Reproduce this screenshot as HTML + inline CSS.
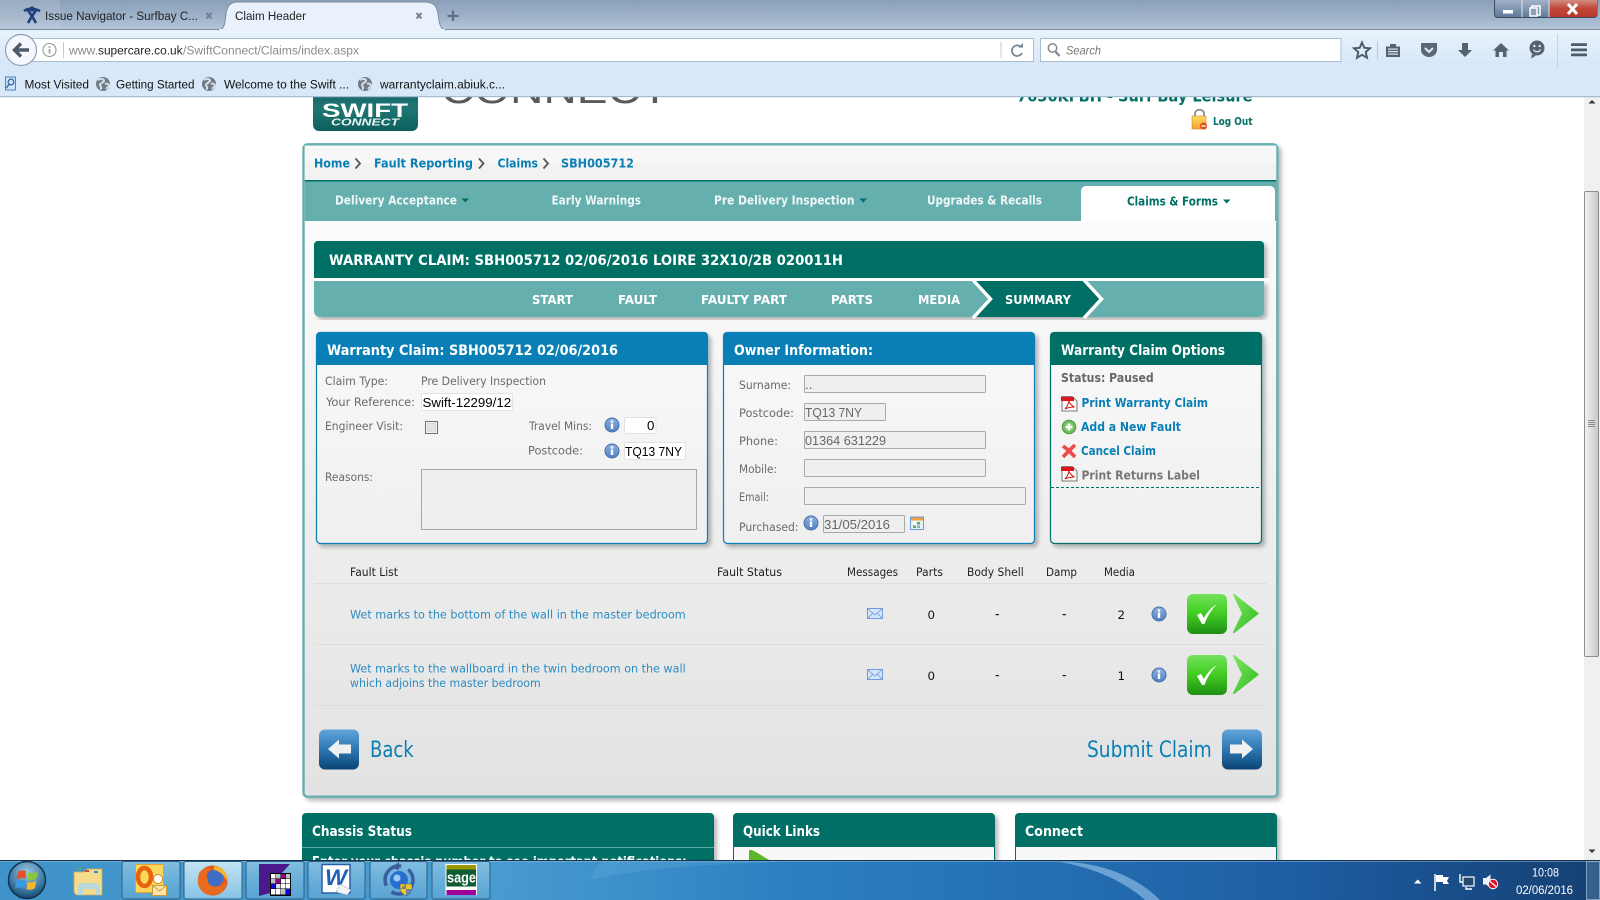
<!DOCTYPE html>
<html><head><meta charset="utf-8"><title>Claim Header</title>
<style>
html,body{margin:0;padding:0;background:#fff;width:1600px;height:900px;overflow:hidden}
svg{display:block}
text{font-family:"DejaVu Sans","Liberation Sans",sans-serif;font-size:12px;white-space:pre}
.l{fill:#6a6a6a;font-size:11.8px}
.h{fill:#222;font-size:11.8px}
.f{fill:#2b8cc0;font-size:11.8px}
.n{fill:#111;font-size:11.8px}
.hd{fill:#fff;font-weight:bold;font-size:14px}
.st{fill:#fff;font-weight:bold;font-size:12.5px}
.nv{fill:#eef7f6;font-weight:bold;font-size:12px}
.bc{fill:#0a7fb5;font-weight:bold;font-size:12.5px}
.lk{fill:#0a7fb5;font-weight:bold;font-size:12.3px}
.ch{font-family:"Liberation Sans",sans-serif;font-size:12.3px;fill:#222}
.in{font-family:"Liberation Sans",sans-serif;font-size:13.3px;fill:#000}
.ig{font-family:"Liberation Sans",sans-serif;font-size:13.3px;fill:#666}
.big{fill:#0a7fb5;font-size:22px}
</style></head><body>
<svg xmlns="http://www.w3.org/2000/svg" width="1600" height="900" viewBox="0 0 1600 900">
<defs>
<linearGradient id="title" x1="0" y1="0" x2="0" y2="1"><stop offset="0" stop-color="#8aa0ba"/><stop offset=".6" stop-color="#9fb3ca"/><stop offset="1" stop-color="#b6c7da"/></linearGradient>
<linearGradient id="bar" x1="0" y1="0" x2="0" y2="1"><stop offset="0" stop-color="#e9f2fc"/><stop offset="1" stop-color="#d9e8f8"/></linearGradient>
<linearGradient id="pan" x1="0" y1="0" x2="0" y2="1"><stop offset="0" stop-color="#ffffff"/><stop offset="1" stop-color="#e2e2e2"/></linearGradient>
<linearGradient id="bd" x1="0" y1="0" x2="0" y2="1"><stop offset="0" stop-color="#f9f9f9"/><stop offset="1" stop-color="#efefef"/></linearGradient>
<linearGradient id="logo" x1="0" y1="0" x2="0" y2="1"><stop offset="0" stop-color="#0f5f5c"/><stop offset=".5" stop-color="#1f7773"/><stop offset="1" stop-color="#0d5f5d"/></linearGradient>
<linearGradient id="blu" x1="0" y1="0" x2="0" y2="1"><stop offset="0" stop-color="#62a4da"/><stop offset=".5" stop-color="#2d77b3"/><stop offset="1" stop-color="#0b4474"/></linearGradient>
<linearGradient id="grn" x1="0" y1="0" x2="0" y2="1"><stop offset="0" stop-color="#74e25c"/><stop offset=".45" stop-color="#44d024"/><stop offset="1" stop-color="#1f8f14"/></linearGradient>
<linearGradient id="gar" x1="0" y1="0" x2="1" y2="1"><stop offset="0" stop-color="#7fe860"/><stop offset="1" stop-color="#2fb81e"/></linearGradient>
<linearGradient id="inf" x1="0" y1="0" x2="0" y2="1"><stop offset="0" stop-color="#8fb2e0"/><stop offset="1" stop-color="#4f80c0"/></linearGradient>
<linearGradient id="task" x1="0" y1="0" x2="1" y2="0"><stop offset="0" stop-color="#3f93c8"/><stop offset=".3" stop-color="#4a9dd0"/><stop offset=".5" stop-color="#2b7fc1"/><stop offset=".8" stop-color="#1e5fa5"/><stop offset="1" stop-color="#153f72"/></linearGradient>
<linearGradient id="btn" x1="0" y1="0" x2="0" y2="1"><stop offset="0" stop-color="#8cc4e4" stop-opacity=".85"/><stop offset="1" stop-color="#5ea8d6" stop-opacity=".7"/></linearGradient>
<linearGradient id="btn2" x1="0" y1="0" x2="0" y2="1"><stop offset="0" stop-color="#c4e4f4"/><stop offset="1" stop-color="#86c2e4"/></linearGradient>
<linearGradient id="wmin" x1="0" y1="0" x2="0" y2="1"><stop offset="0" stop-color="#a8b8cb"/><stop offset=".5" stop-color="#8498b2"/><stop offset="1" stop-color="#5d7896"/></linearGradient>
<linearGradient id="wcl" x1="0" y1="0" x2="0" y2="1"><stop offset="0" stop-color="#d2958a"/><stop offset=".5" stop-color="#c2493a"/><stop offset="1" stop-color="#b8382a"/></linearGradient>
<linearGradient id="thumb" x1="0" y1="0" x2="1" y2="0"><stop offset="0" stop-color="#f2f2f2"/><stop offset=".6" stop-color="#d8d8d8"/><stop offset="1" stop-color="#c6c6c6"/></linearGradient>
<linearGradient id="lock" x1="0" y1="0" x2="0" y2="1"><stop offset="0" stop-color="#ffd968"/><stop offset="1" stop-color="#f2a52a"/></linearGradient>
<radialGradient id="orb" cx=".5" cy=".3" r=".75"><stop offset="0" stop-color="#9cc6e2"/><stop offset=".6" stop-color="#3f7fa8"/><stop offset="1" stop-color="#0f3a60"/></radialGradient>
<clipPath id="refclip"><rect x="422" y="394" width="90" height="16"/></clipPath>
<clipPath id="toplogo"><rect x="300" y="97" width="130" height="40"/></clipPath>
<filter id="sh" x="-5%" y="-5%" width="112%" height="112%"><feDropShadow dx="3" dy="3" stdDeviation="2" flood-color="#000" flood-opacity=".28"/></filter>
<g id="info"><circle r="7" fill="url(#inf)" stroke="#4470ad" stroke-width="1"/><rect x="-1.2" y="-1.5" width="2.4" height="5.5" fill="#fff"/><rect x="-1.2" y="-4.6" width="2.4" height="2.2" fill="#fff"/></g>
<g id="pdf"><path d="M0 .5H10L15 5V15H0Z" fill="#f8f8f8" stroke="#555" stroke-width=".8"/><path d="M-1 1H12V5H-1Z" fill="#e0141a"/><path d="M3 13C6 10 7 6 6.5 4.5C8 8 10 10 12.5 11C9 11 6 11.500 3 13Z" fill="none" stroke="#d02020" stroke-width="1"/></g>
<g id="env"><rect x=".5" y=".5" width="15" height="10" fill="#d7e6f9" stroke="#6f9bd8"/><path d="M1 1L8 7L15 1M1 10L6 5M15 10L10 5" fill="none" stroke="#7fa7dc" stroke-width="1"/></g>
<g id="chk"><rect width="40" height="40" rx="6" fill="url(#grn)"/><path d="M10 21L14 19L17 24C20 18 25 13 30 10C24 16 20 23 17.500 30L15 30Z" fill="#fff"/></g>
<path id="garr" d="M0 1Q0 -1 2 .5L26 19.500L2 38.500Q0 40 0 38L9 19.500Z" fill="url(#gar)"/>
<g id="globe"><circle r="7" fill="#6f7b87"/><path d="M-5 -4C-2 -6 1 -5 1 -3C0 -1 -3 -1 -3 1C-2 3 -1 5 -3 5M2 0C4 -1 6 0 6 2L3 5" fill="none" stroke="#d7dee6" stroke-width="2"/></g>
</defs>

<rect width="1600" height="900" fill="#fff"/>

<!-- top page fragments -->
<g clip-path="url(#toplogo)"><rect x="313" y="85" width="105" height="46" rx="6" fill="url(#logo)"/></g>
<text x="322" y="117" textLength="86" lengthAdjust="spacingAndGlyphs" style="font-family:'Liberation Sans',sans-serif;font-size:19px;font-weight:bold;fill:#fff">SWIFT</text>
<text x="331" y="125.500" textLength="68" lengthAdjust="spacingAndGlyphs" style="font-family:'Liberation Sans',sans-serif;font-size:10px;font-weight:bold;font-style:italic;fill:#e8f4f2">CONNECT</text>
<text x="441" y="103" textLength="228" lengthAdjust="spacingAndGlyphs" style="font-family:'Liberation Sans',sans-serif;font-size:38px;fill:#57595b">CONNECT</text>
<text x="1017" y="101.500" textLength="235.500" lengthAdjust="spacingAndGlyphs" style="font-size:16px;font-weight:bold;fill:#006f65">7656KFBH - Surf Bay Leisure</text>
<g>
<path d="M1195 117V113.500C1195 108.500 1204 108.500 1204 113.500V117" fill="none" stroke="#8a8f94" stroke-width="1.800"/>
<rect x="1192" y="116" width="14" height="13" fill="url(#lock)" stroke="#c88a2a" stroke-width=".6"/>
<circle cx="1203.500" cy="126" r="3.500" fill="#e0501a"/><rect x="1201.500" y="125.300" width="4" height="1.400" fill="#fff"/>
</g>
<text x="1213" y="125" textLength="39.500" lengthAdjust="spacingAndGlyphs" style="font-size:10.500px;font-weight:bold;fill:#006f65">Log Out</text>

<!-- main panel -->
<rect x="303.500" y="144.300" width="973.800" height="652.400" rx="4" fill="url(#pan)" stroke="#66afaf" stroke-width="2.400" filter="url(#sh)"/>
<rect x="304.700" y="145.500" width="971.500" height="17.500" fill="#f7f7f7"/>
<rect x="304.700" y="163" width="971.500" height="17" fill="#f2f2f0"/>
<rect x="304.700" y="180" width="971.500" height="1.500" fill="#006f65"/>
<rect x="304.700" y="181.500" width="971.500" height="39.500" fill="#66afaf"/>
<path d="M1081 221V191a5 5 0 0 1 5-5H1270a5 5 0 0 1 5 5V221Z" fill="#fff"/>
<rect x="304.700" y="221" width="971.500" height="1" fill="#fff"/>

<text class="bc" x="314" y="167.500" textLength="36" lengthAdjust="spacingAndGlyphs">Home</text>
<path d="M355.500 158.500L360 163.500L355.500 168.500" fill="none" stroke="#555" stroke-width="1.800"/>
<text class="bc" x="374" y="167.500" textLength="99" lengthAdjust="spacingAndGlyphs">Fault Reporting</text>
<path d="M479 158.500L483.500 163.500L479 168.500" fill="none" stroke="#555" stroke-width="1.800"/>
<text class="bc" x="497.500" y="167.500" textLength="40.500" lengthAdjust="spacingAndGlyphs">Claims</text>
<path d="M543.500 158.500L548 163.500L543.500 168.500" fill="none" stroke="#555" stroke-width="1.800"/>
<text class="bc" x="561" y="167.500" textLength="73" lengthAdjust="spacingAndGlyphs">SBH005712</text>

<text class="nv" x="335" y="204.500" textLength="122" lengthAdjust="spacingAndGlyphs">Delivery Acceptance</text>
<path d="M461.500 198.500H469L465.200 202.500Z" fill="#006f65"/>
<text class="nv" x="551.500" y="204.500" textLength="89.500" lengthAdjust="spacingAndGlyphs">Early Warnings</text>
<text class="nv" x="714" y="204.500" textLength="140.500" lengthAdjust="spacingAndGlyphs">Pre Delivery Inspection</text>
<path d="M859.500 198.500H867L863.200 202.500Z" fill="#006f65"/>
<text class="nv" x="927" y="204.500" textLength="115" lengthAdjust="spacingAndGlyphs">Upgrades &amp; Recalls</text>
<text class="nv" x="1127" y="205.500" textLength="91" lengthAdjust="spacingAndGlyphs" style="fill:#006f65">Claims &amp; Forms</text>
<path d="M1223 199.500H1230.500L1226.700 203.500Z" fill="#006f65"/>

<!-- title bars -->
<path d="M314 278V245a4 4 0 0 1 4-4H1260a4 4 0 0 1 4 4V278Z" fill="#006f65" filter="url(#sh)"/>
<text class="hd" x="329" y="265" textLength="514" lengthAdjust="spacingAndGlyphs">WARRANTY CLAIM: SBH005712 02/06/2016 LOIRE 32X10/2B 020011H</text>
<rect x="314" y="278" width="955" height="3" fill="#fff"/>
<path d="M314 281H1264V311a6 6 0 0 1-6 6H320a6 6 0 0 1-6-6Z" fill="#66afaf" filter="url(#sh)"/>
<path d="M973 281H1084L1101.500 299L1084 317H973L990.500 299Z" fill="#006f65"/>
<path d="M973 280L990.500 299L973 318M1084 280L1101.500 299L1084 318" fill="none" stroke="#fff" stroke-width="3.500"/>
<rect x="960" y="316.800" width="160" height="1" fill="#66afaf" opacity="0"/>
<text class="st" x="532" y="304" textLength="41" lengthAdjust="spacingAndGlyphs">START</text>
<text class="st" x="618" y="304" textLength="39" lengthAdjust="spacingAndGlyphs">FAULT</text>
<text class="st" x="701" y="304" textLength="86" lengthAdjust="spacingAndGlyphs">FAULTY PART</text>
<text class="st" x="831" y="304" textLength="42" lengthAdjust="spacingAndGlyphs">PARTS</text>
<text class="st" x="918" y="304" textLength="42" lengthAdjust="spacingAndGlyphs">MEDIA</text>
<text class="st" x="1005" y="304" textLength="66" lengthAdjust="spacingAndGlyphs">SUMMARY</text>

<!-- panel 1 -->
<rect x="316.500" y="332.500" width="391" height="211" rx="4" fill="url(#bd)" stroke="#0a7fb5" stroke-width="1.200" filter="url(#sh)"/>
<path d="M316 365V336a4 4 0 0 1 4-4H704a4 4 0 0 1 4 4V365Z" fill="#0a7fb5"/>
<text class="hd" x="327" y="355" textLength="291" lengthAdjust="spacingAndGlyphs">Warranty Claim: SBH005712 02/06/2016</text>
<text class="l" x="325" y="385" textLength="63" lengthAdjust="spacingAndGlyphs">Claim Type:</text>
<text class="l" x="421" y="385" textLength="125" lengthAdjust="spacingAndGlyphs">Pre Delivery Inspection</text>
<text class="l" x="326" y="406" textLength="89" lengthAdjust="spacingAndGlyphs">Your Reference:</text>
<rect x="421.500" y="393.500" width="91" height="17" rx="1.500" fill="#fff" stroke="#e2e2e2"/>
<g clip-path="url(#refclip)"><text class="in" x="422.500" y="407" textLength="96" lengthAdjust="spacingAndGlyphs">Swift-12299/123</text></g>
<text class="l" x="325" y="430" textLength="78" lengthAdjust="spacingAndGlyphs">Engineer Visit:</text>
<rect x="425.500" y="421.500" width="12" height="12" fill="#f2f2f2" stroke="#707070"/>
<rect x="427.500" y="423.500" width="8" height="8" fill="#e4e4e4" stroke="#c8c8c8" stroke-width=".5"/>
<text class="l" x="529" y="430" textLength="63" lengthAdjust="spacingAndGlyphs">Travel Mins:</text>
<use href="#info" x="612" y="425"/>
<rect x="624.500" y="417.500" width="31.500" height="16" rx="1.500" fill="#fff" stroke="#e2e2e2"/>
<text class="in" x="647" y="430">0</text>
<text class="l" x="528" y="454.500" textLength="55" lengthAdjust="spacingAndGlyphs">Postcode:</text>
<use href="#info" x="612" y="451"/>
<rect x="624.500" y="442.500" width="61" height="17" rx="1.500" fill="#fff" stroke="#e2e2e2"/>
<text class="in" x="625" y="456" textLength="57" lengthAdjust="spacingAndGlyphs">TQ13 7NY</text>
<text class="l" x="325" y="481" textLength="48" lengthAdjust="spacingAndGlyphs">Reasons:</text>
<rect x="421.500" y="469.500" width="275" height="60" fill="#efefef" stroke="#a9a9a9"/>

<!-- panel 2 -->
<rect x="723.500" y="332.500" width="311" height="211" rx="4" fill="url(#bd)" stroke="#0a7fb5" stroke-width="1.200" filter="url(#sh)"/>
<path d="M723 365V336a4 4 0 0 1 4-4H1031a4 4 0 0 1 4 4V365Z" fill="#0a7fb5"/>
<text class="hd" x="734" y="355" textLength="139" lengthAdjust="spacingAndGlyphs">Owner Information:</text>
<g fill="#efefef" stroke="#a9a9a9">
<rect x="804.500" y="375.500" width="181" height="17" rx="1"/>
<rect x="804.500" y="403.500" width="81" height="17" rx="1"/>
<rect x="804.500" y="431.500" width="181" height="17" rx="1"/>
<rect x="804.500" y="459.500" width="181" height="17" rx="1"/>
<rect x="804.500" y="487.500" width="221" height="17" rx="1"/>
<rect x="823.500" y="515.500" width="81" height="17" rx="1"/>
</g>
<text class="l" x="739" y="389" textLength="52" lengthAdjust="spacingAndGlyphs">Surname:</text>
<text class="l" x="739" y="417" textLength="55" lengthAdjust="spacingAndGlyphs">Postcode:</text>
<text class="l" x="739" y="445" textLength="39" lengthAdjust="spacingAndGlyphs">Phone:</text>
<text class="l" x="739" y="473" textLength="38" lengthAdjust="spacingAndGlyphs">Mobile:</text>
<text class="l" x="739" y="501" textLength="30" lengthAdjust="spacingAndGlyphs">Email:</text>
<text class="l" x="739" y="531" textLength="59.500" lengthAdjust="spacingAndGlyphs">Purchased:</text>
<text class="ig" x="805" y="389">..</text>
<text class="ig" x="805" y="417" textLength="57" lengthAdjust="spacingAndGlyphs">TQ13 7NY</text>
<text class="ig" x="805" y="445" textLength="81" lengthAdjust="spacingAndGlyphs">01364 631229</text>
<text class="ig" x="824" y="529" textLength="66" lengthAdjust="spacingAndGlyphs">31/05/2016</text>
<use href="#info" x="811" y="523"/>
<g><rect x="910.500" y="517" width="13" height="12.500" fill="#e8f0fa" stroke="#6f9bd8"/><rect x="911" y="517.500" width="12" height="3" fill="#f0a040"/><rect x="913" y="522" width="3" height="2.500" fill="#fff"/><rect x="917" y="522" width="3" height="2.500" fill="#4caf50"/><rect x="913" y="525.500" width="3" height="2.500" fill="#4caf50"/><rect x="917" y="525.500" width="3" height="2.500" fill="#9ab"/></g>

<!-- panel 3 -->
<rect x="1050.500" y="332.500" width="211" height="211" rx="4" fill="url(#bd)" stroke="#006f65" stroke-width="1.200" filter="url(#sh)"/>
<path d="M1050 365V336a4 4 0 0 1 4-4H1258a4 4 0 0 1 4 4V365Z" fill="#006f65"/>
<text class="hd" x="1061" y="355" textLength="164" lengthAdjust="spacingAndGlyphs">Warranty Claim Options</text>
<text x="1061" y="382" textLength="92.700" lengthAdjust="spacingAndGlyphs" style="font-weight:bold;font-size:12.300px;fill:#666">Status: Paused</text>
<use href="#pdf" x="1062" y="396"/>
<text class="lk" x="1081.500" y="407" textLength="126.500" lengthAdjust="spacingAndGlyphs">Print Warranty Claim</text>
<g><circle cx="1069" cy="427" r="6.800" fill="#6fbd5e" stroke="#4a9a40"/><circle cx="1069" cy="427" r="3.800" fill="#a8dca0"/><rect x="1065.500" y="426" width="7" height="2" fill="#fff"/><rect x="1068" y="423.500" width="2" height="7" fill="#fff"/></g>
<text class="lk" x="1081" y="431" textLength="100" lengthAdjust="spacingAndGlyphs">Add a New Fault</text>
<path d="M1063 446L1069 450.700M1075 445L1069 450.700L1063 457M1069 450.700L1075 457" fill="none" stroke="#ee4a4a" stroke-width="3.600"/>
<text class="lk" x="1081" y="455" textLength="75" lengthAdjust="spacingAndGlyphs">Cancel Claim</text>
<use href="#pdf" x="1062" y="466"/>
<text x="1081.500" y="479.500" textLength="118.500" lengthAdjust="spacingAndGlyphs" style="font-weight:bold;font-size:12.300px;fill:#777">Print Returns Label</text>
<path d="M1051 487.500H1259" stroke="#006f65" stroke-width="1" stroke-dasharray="3 2"/>

<!-- fault list -->
<text class="h" x="350" y="576" textLength="48" lengthAdjust="spacingAndGlyphs">Fault List</text>
<text class="h" x="717" y="576" textLength="65" lengthAdjust="spacingAndGlyphs">Fault Status</text>
<text class="h" x="847" y="576" textLength="51" lengthAdjust="spacingAndGlyphs">Messages</text>
<text class="h" x="916" y="576" textLength="27" lengthAdjust="spacingAndGlyphs">Parts</text>
<text class="h" x="967" y="576" textLength="56.700" lengthAdjust="spacingAndGlyphs">Body Shell</text>
<text class="h" x="1046" y="576" textLength="31" lengthAdjust="spacingAndGlyphs">Damp</text>
<text class="h" x="1104" y="576" textLength="31" lengthAdjust="spacingAndGlyphs">Media</text>
<g fill="#dddddd"><rect x="314" y="583" width="953" height="1"/><rect x="314" y="644" width="953" height="1"/><rect x="314" y="705" width="953" height="1"/></g>

<text class="f" x="350" y="618.500" textLength="335.700" lengthAdjust="spacingAndGlyphs">Wet marks to the bottom of the wall in the master bedroom</text>
<text class="f" x="350" y="672.500" textLength="335.700" lengthAdjust="spacingAndGlyphs">Wet marks to the wallboard in the twin bedroom on the wall</text>
<text class="f" x="350" y="687" textLength="190.700" lengthAdjust="spacingAndGlyphs">which adjoins the master bedroom</text>

<use href="#env" x="867" y="608"/><use href="#env" x="867" y="669"/>
<text class="n" x="927.500" y="619">0</text><text class="n" x="927.500" y="680">0</text>
<rect x="995.500" y="614" width="3.500" height="1.200" fill="#222"/><rect x="995.500" y="675" width="3.500" height="1.200" fill="#222"/>
<rect x="1062.500" y="614" width="3.500" height="1.200" fill="#222"/><rect x="1062.500" y="675" width="3.500" height="1.200" fill="#222"/>
<text class="n" x="1117.500" y="619">2</text><text class="n" x="1117.500" y="680">1</text>
<use href="#info" x="1159" y="614"/><use href="#info" x="1159" y="675"/>
<use href="#chk" x="1187" y="594"/><use href="#chk" x="1187" y="655"/>
<use href="#garr" x="1233" y="594"/><use href="#garr" x="1233" y="655"/>

<!-- back / submit -->
<rect x="319" y="729.500" width="40" height="40" rx="6" fill="url(#blu)"/>
<path d="M328 749L339 739.500V744.500H351V753.500H339V758.500Z" fill="#f0f0f0"/>
<text class="big" x="370" y="757" textLength="43.700" lengthAdjust="spacingAndGlyphs">Back</text>
<text class="big" x="1087" y="757" textLength="124.700" lengthAdjust="spacingAndGlyphs">Submit Claim</text>
<rect x="1222" y="729.500" width="40" height="40" rx="6" fill="url(#blu)"/>
<path d="M1253 749L1242 739.500V744.500H1230V753.500H1242V758.500Z" fill="#f0f0f0"/>

<!-- bottom panels -->
<path d="M302 862V817a4 4 0 0 1 4-4H710a4 4 0 0 1 4 4V862Z" fill="#006f65" filter="url(#sh)"/>
<rect x="302" y="847" width="412" height="1" fill="#5fa9a3"/>
<text class="hd" x="312" y="836" textLength="100" lengthAdjust="spacingAndGlyphs">Chassis Status</text>
<text x="312" y="866" textLength="374.700" lengthAdjust="spacingAndGlyphs" style="font-weight:bold;font-size:13px;fill:#fff">Enter your chassis number to see important notifications:</text>

<path d="M733 862V817a4 4 0 0 1 4-4H991a4 4 0 0 1 4 4V862Z" fill="#f8f8f8" filter="url(#sh)"/>
<path d="M733 847V817a4 4 0 0 1 4-4H991a4 4 0 0 1 4 4V847Z" fill="#006f65"/>
<path d="M733.500 847V862M994.500 847V862" stroke="#006f65"/>
<text class="hd" x="743" y="836" textLength="77" lengthAdjust="spacingAndGlyphs">Quick Links</text>
<path d="M749 862V851C749 849 752 850 754 851L771 861Z" fill="#5cb82a"/>

<path d="M1015 862V817a4 4 0 0 1 4-4H1273a4 4 0 0 1 4 4V862Z" fill="#f8f8f8" filter="url(#sh)"/>
<path d="M1015 847V817a4 4 0 0 1 4-4H1273a4 4 0 0 1 4 4V847Z" fill="#006f65"/>
<path d="M1015.500 847V862M1276.500 847V862" stroke="#006f65"/>
<text class="hd" x="1025" y="836" textLength="58" lengthAdjust="spacingAndGlyphs">Connect</text>

<!-- scrollbar -->
<rect x="1584" y="97" width="16" height="763" fill="#f0f0f0"/>
<path d="M1588.500 103.500H1595.500L1592 100Z" fill="#333"/>
<path d="M1588.500 849.500H1595.500L1592 853Z" fill="#333"/>
<rect x="1584.500" y="191.500" width="14" height="465" rx="1.500" fill="url(#thumb)" stroke="#8e8e8e"/>
<g fill="#777"><rect x="1588" y="420" width="7" height=".8"/><rect x="1588" y="422" width="7" height=".8"/><rect x="1588" y="424" width="7" height=".8"/><rect x="1588" y="426" width="7" height=".8"/></g>

<!-- browser chrome -->
<rect width="1600" height="29.500" fill="url(#title)"/>
<rect width="60" height="29" fill="#c9cfd6" opacity=".25"/>
<rect y="29" width="1600" height="1" fill="#7a8b9f"/>
<rect y="30" width="1600" height="32" fill="url(#bar)"/>
<rect y="62" width="1600" height="34.500" fill="#d9e8f8"/>
<rect y="96" width="1600" height="1.200" fill="#a6bbd0"/>

<!-- tabs -->
<path d="M24 11c4-3 10-3 16 0M27 9l5 7 5-7M28 23l4-7 4 7" fill="none" stroke="#1c3f7c" stroke-width="2.600"/><circle cx="32" cy="9" r="2.600" fill="#1c3f7c"/>
<text x="45" y="20" textLength="153" lengthAdjust="spacingAndGlyphs" class="ch">Issue Navigator - Surfbay C...</text>
<path d="M206.500 13L211.500 18.500M211.500 13L206.500 18.500" stroke="#6f7f90" stroke-width="2"/>
<path d="M218 30C225 30 225 22 226 14C227 6 230 2 238 2H424C434 2 437 6 438 14C439 22 440 30 446 30Z" fill="#e9f2fc" stroke="#7a8b9f" stroke-width="1"/>
<rect x="219" y="29" width="226" height="2" fill="#e9f2fc"/>
<text x="235" y="20" textLength="71" lengthAdjust="spacingAndGlyphs" class="ch">Claim Header</text>
<path d="M416.500 13L421.500 18.500M421.500 13L416.500 18.500" stroke="#6f7f90" stroke-width="2"/>
<path d="M453 10.500V21M447.500 16H458.500" stroke="#5d6f84" stroke-width="2.200"/>

<!-- window controls -->
<rect x="1494.500" y="-2" width="102.500" height="19.500" rx="3" fill="url(#wmin)" stroke="#3d4d60"/>
<path d="M1549 -1H1597V14a3 3 0 0 1-3 3H1549Z" fill="url(#wcl)"/>
<path d="M1522 0V17M1549 0V17" stroke="#dde4ec" stroke-width="1"/>
<rect x="1503" y="10" width="10" height="3.500" fill="#fff"/>
<rect x="1532" y="6" width="8" height="9" fill="none" stroke="#fff" stroke-width="1.500"/><rect x="1530" y="8" width="7" height="8" fill="#8ca0b8" stroke="#fff" stroke-width="1.500"/>
<path d="M1568 4L1577 14M1577 4L1568 14" stroke="#fff" stroke-width="3"/>

<!-- url bar -->
<rect x="30.500" y="38.500" width="1003" height="23" fill="#fff" stroke="#a9bcd0"/>
<circle cx="21" cy="50" r="15.500" fill="#f4f8fd" stroke="#8fa3b8" stroke-width="1.200"/>
<path d="M29 50H15M21 43.500L14.500 50L21 56.500" fill="none" stroke="#4d5a68" stroke-width="3.400"/>
<circle cx="49.500" cy="50" r="6.500" fill="none" stroke="#8e9aa6" stroke-width="1.100"/><rect x="48.700" y="49" width="1.600" height="4.500" fill="#8e9aa6"/><rect x="48.700" y="46.300" width="1.600" height="1.600" fill="#8e9aa6"/>
<rect x="63" y="42" width="1" height="16" fill="#c5ced8"/>
<text x="69" y="54.500" textLength="29" lengthAdjust="spacingAndGlyphs" style="font-family:'Liberation Sans',sans-serif;font-size:12.300px;fill:#8a8a8a">www.</text>
<text x="98" y="54.500" textLength="84.600" lengthAdjust="spacingAndGlyphs" style="font-family:'Liberation Sans',sans-serif;font-size:12.300px;fill:#222">supercare.co.uk</text>
<text x="183" y="54.500" textLength="176" lengthAdjust="spacingAndGlyphs" style="font-family:'Liberation Sans',sans-serif;font-size:12.300px;fill:#8a8a8a">/SwiftConnect/Claims/index.aspx</text>
<rect x="1000.500" y="42" width="1" height="16" fill="#c5ced8"/>
<path d="M1021.500 47.500A5.300 5.300 0 1 0 1022 53" fill="none" stroke="#7b8a99" stroke-width="1.800"/><path d="M1018 47.500H1023V43Z" fill="#7b8a99"/>
<rect x="1040.500" y="38.500" width="300.500" height="23" fill="#fff" stroke="#a9bcd0"/>
<circle cx="1052.500" cy="48" r="4.200" fill="none" stroke="#7f8a96" stroke-width="1.500"/><path d="M1055.500 51.500L1059.500 56" stroke="#7f8a96" stroke-width="2.200"/>
<text x="1066" y="54.500" textLength="35" lengthAdjust="spacingAndGlyphs" style="font-family:'Liberation Sans',sans-serif;font-size:12.300px;font-style:italic;fill:#777">Search</text>

<!-- toolbar icons -->
<path d="M1362 42.500L1364.300 47.800L1370 48.300L1365.700 52L1367 57.800L1362 54.800L1357 57.800L1358.300 52L1354 48.300L1359.700 47.800Z" fill="none" stroke="#4d5a68" stroke-width="1.900"/>
<rect x="1377" y="41" width="1" height="18" fill="#b9c7d6"/>
<path d="M1386 46.500H1390V44H1396V46.500H1400V57H1386Z" fill="#55626f"/><g fill="#dfe9f4"><rect x="1388" y="48.500" width="10" height="1.200"/><rect x="1388" y="51" width="10" height="1.200"/><rect x="1388" y="53.500" width="10" height="1.200"/></g>
<path d="M1421 43H1437V50C1437 54 1433 57 1429 57C1425 57 1421 54 1421 50Z" fill="#5a6774"/><path d="M1425 48L1429 52L1433 48" fill="none" stroke="#e3edf7" stroke-width="2"/>
<path d="M1462 43H1468V50H1472L1465 57L1458 50H1462Z" fill="#55626f"/>
<path d="M1501 43L1509 50.500H1506.500V57H1503V52H1499V57H1495.500V50.500H1493Z" fill="#55626f"/>
<circle cx="1537" cy="48" r="7.500" fill="#55626f"/><path d="M1532 54L1531 58.500L1536 55.500Z" fill="#55626f"/><circle cx="1534.300" cy="46" r="1.200" fill="#e3edf7"/><circle cx="1539.700" cy="46" r="1.200" fill="#e3edf7"/><path d="M1533.500 49.500C1535 52.500 1539 52.500 1540.500 49.500" fill="none" stroke="#e3edf7" stroke-width="1.300"/>
<rect x="1557" y="34" width="1" height="34" fill="#c5d3e2"/>
<g fill="#4d5a68"><rect x="1571" y="43.300" width="16" height="2.700" rx=".5"/><rect x="1571" y="48.500" width="16" height="2.700" rx=".5"/><rect x="1571" y="53.500" width="16" height="2.700" rx=".5"/></g>

<!-- bookmarks -->
<rect x="5.500" y="77" width="10" height="13" fill="#cfe2f6" stroke="#4f85be"/><circle cx="11" cy="82" r="2.800" fill="none" stroke="#2d6fb3" stroke-width="1.300"/><path d="M9 84.500L6 88" stroke="#2d6fb3" stroke-width="1.500"/>
<text x="24.500" y="88.500" textLength="64.500" lengthAdjust="spacingAndGlyphs" class="ch" style="fill:#111">Most Visited</text>
<use href="#globe" x="103" y="84"/>
<text x="116" y="88.500" textLength="78.500" lengthAdjust="spacingAndGlyphs" class="ch" style="fill:#111">Getting Started</text>
<use href="#globe" x="209" y="84"/>
<text x="224" y="88.500" textLength="125" lengthAdjust="spacingAndGlyphs" class="ch" style="fill:#111">Welcome to the Swift ...</text>
<use href="#globe" x="365" y="84"/>
<text x="380" y="88.500" textLength="125" lengthAdjust="spacingAndGlyphs" class="ch" style="fill:#111">warrantyclaim.abiuk.c...</text>

<!-- taskbar -->
<rect y="860" width="1600" height="40" fill="url(#task)"/>
<rect y="860" width="1600" height="1" fill="#16304e"/>
<rect y="861" width="1600" height="1" fill="#8fc0e0" opacity=".5"/>
<path d="M1070 862C1110 865 1140 880 1160 900H1145C1125 882 1095 868 1060 862Z" fill="#a8d0f0" opacity=".55"/>
<path d="M590 880C640 868 700 865 780 862H600Z" fill="#7fbfe6" opacity=".2"/>

<circle cx="27" cy="880" r="18.500" fill="url(#orb)" stroke="#12334f" stroke-width="1.500"/>
<path d="M18 872C21 870 24 870 26 871.500L25.500 879C23 877.500 20 877.500 16.500 879.500Z" fill="#e8502a"/><path d="M28 872C31 874 34 873.500 38 871L36.500 878.500C33.500 880.500 30.500 881 27.500 879.500Z" fill="#8cc63e"/><path d="M16.300 881.500C19.500 879.500 22.500 879.500 25.300 881L24.500 888.500C21.500 887 18.500 887 15 889Z" fill="#3a9ae0"/><path d="M27.500 881.500C30.500 883 33.500 882.500 36.300 880.500L35 888C32 890 29.500 890.500 26.500 889Z" fill="#f5b82a"/>

<path d="M74 872H84L87 869H102V895H78C74 895 74 892 74 890Z" fill="#f5dc8c" stroke="#c9a860" stroke-width=".8"/>
<rect x="77" y="868" width="4" height="2" fill="#4caf50"/><rect x="85" y="870" width="4" height="2" fill="#d9483a"/><rect x="94" y="871" width="4" height="2" fill="#3a8ad9"/>
<path d="M78 895V887C78 883 82 883 84 883H94C98 883 100 885 100 888V895H96V889H83V895Z" fill="#a8d8f0" opacity=".8"/>

<g stroke="#2a5f86" fill="url(#btn)"><rect x="122" y="861.500" width="58" height="37.500" rx="2"/><rect x="246" y="861.500" width="58" height="37.500" rx="2"/><rect x="308" y="861.500" width="57" height="37.500" rx="2"/><rect x="370" y="861.500" width="57" height="37.500" rx="2"/><rect x="432" y="861.500" width="58" height="37.500" rx="2"/></g>
<rect x="184" y="861.500" width="58" height="37.500" rx="2" fill="url(#btn2)" stroke="#2a5f86"/>

<rect x="135.500" y="864.500" width="28" height="28" fill="#f9d85c" stroke="#e8a02a"/>
<ellipse cx="144.500" cy="877" rx="6.500" ry="9" fill="none" stroke="#e8620f" stroke-width="4.500"/>
<circle cx="158" cy="879" r="4.500" fill="#fff" stroke="#d08a2a"/>
<rect x="152.500" y="885.500" width="14" height="10" fill="#fbe6a8" stroke="#c89a40"/><path d="M152.500 885.500L159.500 891L166.500 885.500" fill="none" stroke="#c89a40"/>

<circle cx="212.700" cy="880.500" r="15" fill="#e25a1c"/>
<circle cx="215" cy="878" r="8.500" fill="#3f6cc4"/>
<path d="M214 866C222 866 228 873 227.500 882C225 876 220 871 214 870Z" fill="#f7b52a"/>
<path d="M199 873C203 868 208 867 211 869C207 871 205 875 208 879C207 883 211 887 216 887C220 887 224 885 226 881C226 889 220 895 212 895C204 895 198 889 198 881Z" fill="#ea6a1e"/>

<path d="M259 864H290L282 873H270V893L259 896Z" fill="#4a1a8c"/>
<rect x="270" y="873" width="21" height="23" fill="#000"/>
<g fill="#fff"><rect x="271" y="874" width="4.500" height="4.500"/><rect x="281" y="884" width="4.500" height="4.500"/><rect x="276" y="889" width="4.500" height="5.500"/><rect x="286" y="879" width="4" height="4.500"/></g>
<g fill="#c0c0c0"><rect x="276" y="874" width="4.500" height="4.500"/><rect x="286" y="874" width="4" height="4.500"/><rect x="271" y="879" width="4.500" height="4.500"/><rect x="281" y="889" width="4.500" height="5.500"/></g>
<g fill="#8a0a8a"><rect x="281" y="874" width="4.500" height="4.500"/><rect x="276" y="879" width="4.500" height="4.500"/></g>
<g fill="#0a0ae0"><rect x="271" y="884" width="4.500" height="4.500"/><rect x="286" y="889" width="4" height="5.500"/></g>
<rect x="276" y="884" width="4.500" height="4.500" fill="#e0e0e0"/><rect x="281" y="879" width="4.500" height="4.500" fill="#fff"/><rect x="286" y="884" width="4" height="4.500" fill="#fff"/><rect x="271" y="889" width="4.500" height="5.500" fill="#fff"/>

<rect x="322" y="864.500" width="28" height="28.500" fill="#fff" stroke="#2a5fa8" stroke-width="1.500"/>
<text x="325" y="885" textLength="22" lengthAdjust="spacingAndGlyphs" style="font-family:'Liberation Sans',sans-serif;font-size:22px;font-weight:bold;font-style:italic;fill:#1f5fb5">W</text>
<path d="M340 884L351 890L347 895L336 892Z" fill="#f2f4f8" stroke="#8fa3b8" stroke-width=".5"/>

<circle cx="399" cy="880" r="14" fill="none" stroke="#3a5f9e" stroke-width="3.500" stroke-dasharray="30 8"/>
<path d="M391 868L399 862V870Z" fill="#3a5f9e"/>
<circle cx="399" cy="880" r="9" fill="#2a6fd0"/><circle cx="397" cy="878" r="3.500" fill="#9ccaf2"/>
<path d="M400 884H412V889C412 892 408 895 406 896C404 895 400 892 400 889Z" fill="#f5c518" stroke="#3a5f9e" stroke-width=".6"/><path d="M406 884V896H406C408 895 412 892 412 889H400" fill="#2f6fd0" opacity=".7"/>

<rect x="445.500" y="864" width="31.500" height="31" fill="#fff"/>
<rect x="446.500" y="865" width="29.500" height="4.500" fill="#9a9a00"/>
<rect x="446.500" y="869.500" width="29.500" height="17" fill="#0f5b36"/>
<rect x="446.500" y="890" width="29.500" height="5" fill="#a0009a"/>
<text x="447" y="882.500" textLength="29" lengthAdjust="spacingAndGlyphs" style="font-family:'Liberation Sans',sans-serif;font-size:15px;font-weight:bold;fill:#fff">sage</text>

<!-- tray -->
<path d="M1414 883.500H1421.500L1417.700 879.500Z" fill="#fff"/>
<path d="M1435 874V891" stroke="#fff" stroke-width="1.500"/><path d="M1436 875H1443V877L1449 877L1447 881L1449 884H1443L1443 882H1436Z" fill="#fff"/>
<rect x="1463" y="877" width="11" height="9" fill="#23496f" stroke="#fff" stroke-width="1.200"/><path d="M1466 887V889H1472M1460 874V882H1463" fill="none" stroke="#fff" stroke-width="1.400"/>
<path d="M1483 878H1486L1490.500 874.500V888L1486 884.500H1483Z" fill="#eef2f6"/>
<circle cx="1493" cy="884" r="4.700" fill="#e01020" stroke="#fff" stroke-width="1"/><path d="M1490 881.500L1496 886.500" stroke="#fff" stroke-width="1.300"/>
<text x="1532" y="876.500" textLength="27" lengthAdjust="spacingAndGlyphs" style="font-family:'Liberation Sans',sans-serif;font-size:12.300px;fill:#fff">10:08</text>
<text x="1516" y="894" textLength="57" lengthAdjust="spacingAndGlyphs" style="font-family:'Liberation Sans',sans-serif;font-size:12.300px;fill:#fff">02/06/2016</text>
<rect x="1586.500" y="861.500" width="13" height="38" fill="#5f88ad" fill-opacity=".45" stroke="#a8c0d4" stroke-opacity=".7"/>
</svg>
</body></html>
